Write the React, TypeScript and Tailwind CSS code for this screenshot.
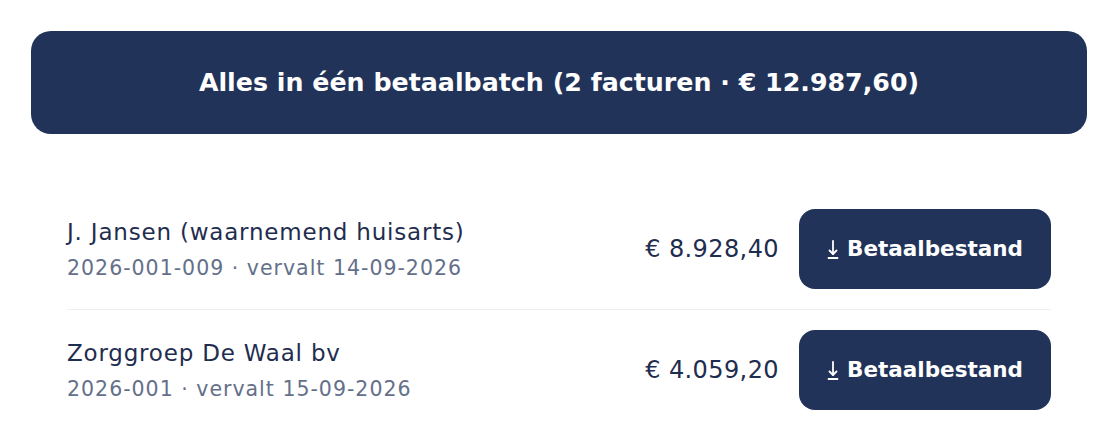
import React from 'react';

interface Invoice {
  id: string;
  name: string;
  ref: string;
  due: string;
  amount: string;
}

const INVOICES: Invoice[] = [
  { id: 'a', name: 'J. Jansen (waarnemend huisarts)', ref: '2026-001-009', due: '14-09-2026', amount: '€ 8.928,40' },
  { id: 'b', name: 'Zorggroep De Waal bv', ref: '2026-001', due: '15-09-2026', amount: '€ 4.059,20' },
];

function DownloadGlyph() {
  return (
    <svg width="12" height="19" viewBox="0 0 12 19" fill="none" stroke="currentColor" strokeWidth="1.8" strokeLinecap="round" strokeLinejoin="round">
      <path d="M6 1v13" />
      <path d="M2.5 10.5L6 14l3.5-3.5" />
      <path d="M1.5 18h9" />
    </svg>
  );
}

export default function App() {
  return (
    <div className="min-h-screen bg-white px-[31px] pt-[31px] text-[#1f2d4f]" style={{ fontFamily: '"DejaVu Sans", sans-serif' }}>
      <button className="flex h-[103px] w-full items-center justify-center rounded-[20px] bg-[#22335a] text-[25.3px] font-bold text-white">
        Alles in één betaalbatch (2 facturen · € 12.987,60)
      </button>

      <div className="mt-[55px] px-9">
        {INVOICES.map((inv, i) => (
          <div key={inv.id} className={`flex items-center gap-5 py-5 ${i > 0 ? 'border-t border-[#efeeea]' : ''}`}>
            <div className="flex-1">
              <div className="text-[23px] leading-[30px] tracking-[0.8px] text-[#1f2d4f]">{inv.name}</div>
              <div className="mt-[8px] text-[20.5px] leading-[26px] tracking-[1px] text-[#64708a]">
                {inv.ref} · vervalt {inv.due}
              </div>
            </div>
            <div className="text-[24px] tracking-[0.4px] text-[#1f2d4f]">{inv.amount}</div>
            <button className="flex h-[80px] w-[252px] items-center justify-center gap-[8px] rounded-[16px] bg-[#22335a] text-[21.5px] font-bold text-white">
              <DownloadGlyph />
              Betaalbestand
            </button>
          </div>
        ))}
      </div>
    </div>
  );
}
